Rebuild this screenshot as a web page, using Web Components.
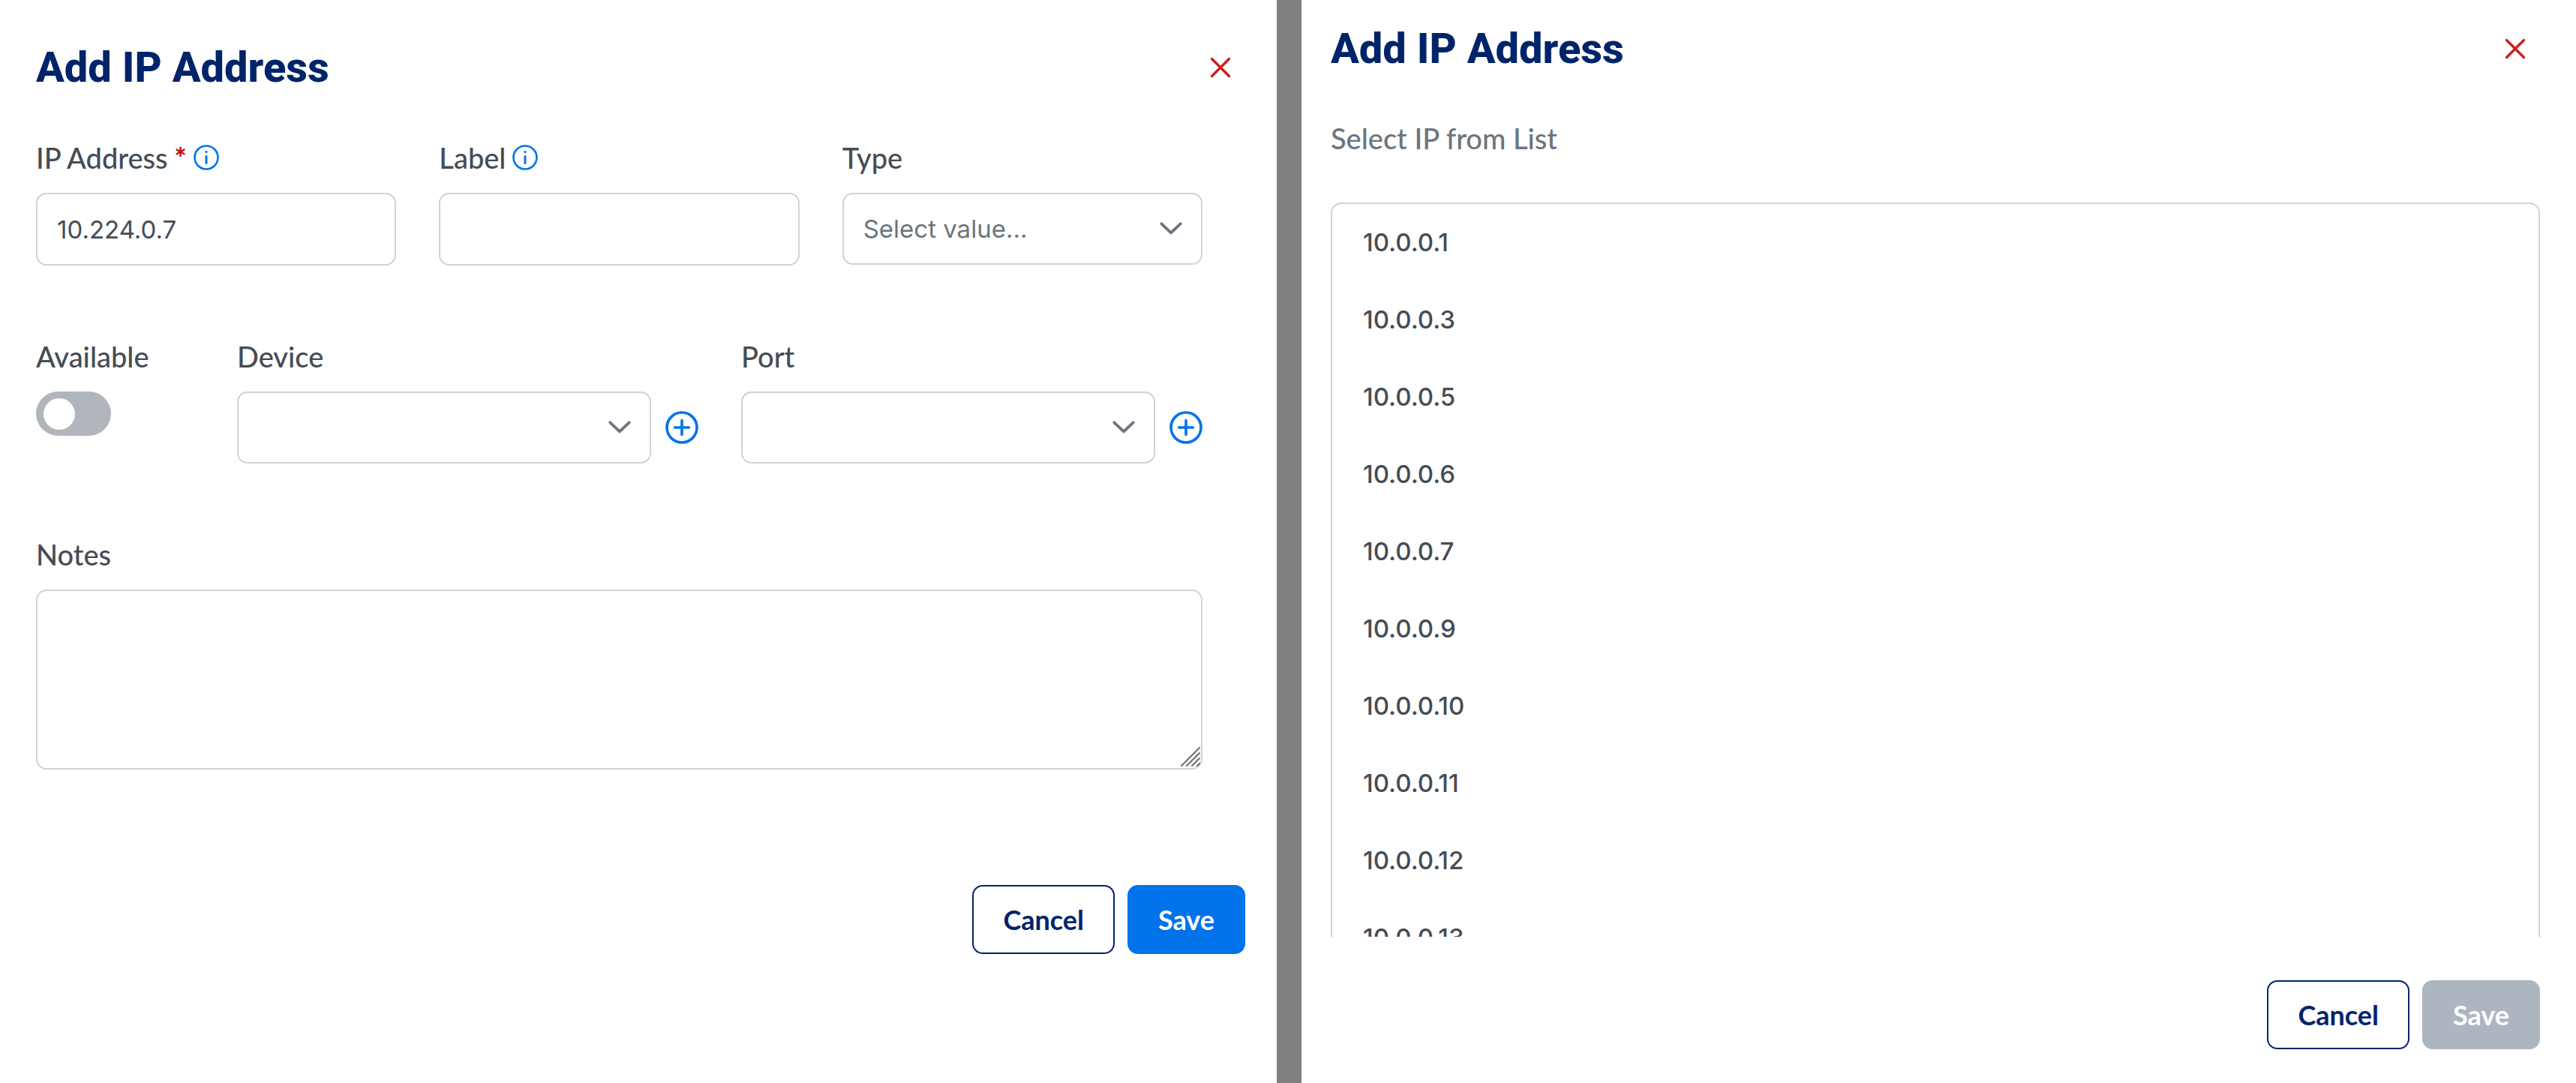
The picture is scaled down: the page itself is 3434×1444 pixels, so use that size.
<!DOCTYPE html>
<html lang="en">
<head>
<meta charset="utf-8">
<title>Add IP Address</title>
<style>
  :root {
    --navy: #002469;
    --blue: #0073ea;
    --red: #c8201f;
    --text: #464c55;
    --muted: #6c757d;
    --border: #cdd3dd;
    --disabled: #adb6bf;
    --font-ui: Lato, "Open Sans", sans-serif;
    --font-input: Inter, "Noto Sans", sans-serif;
    --font-title: Roboto, "Noto Sans", sans-serif;
  }
  body {
    margin: 0;
    min-height: 100vh;
    background: #808080;
    color: var(--text);
    font: 500 38px/48px var(--font-ui);
  }
</style>
</head>
<body>
<ip-workspace></ip-workspace>

<template id="t-workspace">
  <style>
    :host { display: grid; grid-template-columns: 1702fr 1699fr; gap: 33px; height: 100vh; }
    .form { display: flex; flex-direction: column; gap: 97px; margin: 64px 57px 154px 0; }
    .row { display: grid; gap: 57px; }
    .thirds { grid-template-columns: repeat(3, 1fr); }
    .assign { grid-template-columns: 211px 1fr 1fr; }
    .subtitle { margin: 63px 0 62px; color: var(--muted); }
    ip-list { flex: 1; margin-bottom: 58px; }
  </style>
  <ip-dialog class="left" style="--pad: 58px 42px 45px 48px; --close-inset: 11px">
    <span slot="title">Add IP Address</span>
    <div class="form">
      <div class="row thirds">
        <ip-field kind="text" label="IP Address" value="10.224.0.7" required info></ip-field>
        <ip-field kind="text" label="Label" info></ip-field>
        <ip-field kind="select" label="Type" placeholder="Select value..."></ip-field>
      </div>
      <div class="row assign">
        <ip-field kind="toggle" label="Available"></ip-field>
        <ip-field kind="select" label="Device" addable></ip-field>
        <ip-field kind="select" label="Port" addable></ip-field>
      </div>
      <ip-field kind="textarea" label="Notes"></ip-field>
    </div>
    <ip-button slot="actions" variant="outline">Cancel</ip-button>
    <ip-button slot="actions" variant="primary">Save</ip-button>
  </ip-dialog>
  <ip-dialog class="right" style="--pad: 33px 48px 45px 39px; --close-inset: 11px">
    <span slot="title">Add IP Address</span>
    <p class="subtitle">Select IP from List</p>
    <ip-list items="10.0.0.1 10.0.0.3 10.0.0.5 10.0.0.6 10.0.0.7 10.0.0.9 10.0.0.10 10.0.0.11 10.0.0.12 10.0.0.13"></ip-list>
    <ip-button slot="actions" variant="outline">Cancel</ip-button>
    <ip-button slot="actions" variant="primary" disabled>Save</ip-button>
  </ip-dialog>
</template>

<template id="t-dialog">
  <style>
    :host { display: flex; flex-direction: column; box-sizing: border-box; min-height: 0; padding: var(--pad); background: #fff; }
    header { display: flex; align-items: center; justify-content: space-between; padding-right: var(--close-inset); }
    h1 { margin: 0; color: var(--navy); font: 800 56px/64px var(--font-title); }
    .close { display: flex; padding: 8px; border: 0; background: none; color: var(--red); cursor: pointer; }
    .body { display: flex; flex-direction: column; min-height: 0; }
    :host(.right) .body { flex: 1; }
    footer { display: flex; justify-content: flex-end; gap: 17px; }
  </style>
  <header>
    <h1><slot name="title"></slot></h1>
    <button class="close" type="button" aria-label="Close">
      <svg width="28" height="28" viewBox="0 0 28 28" fill="none" stroke="currentColor" stroke-width="3.4" stroke-linecap="round"><path d="M2.5 2.5 25.5 25.5M25.5 2.5 2.5 25.5"/></svg>
    </button>
  </header>
  <div class="body"><slot></slot></div>
  <footer><slot name="actions"></slot></footer>
</template>

<template id="t-button">
  <style>
    :host { display: block; }
    button {
      display: block; box-sizing: border-box; height: 92px; padding: 0 39px;
      border: 2px solid var(--blue); border-radius: 14px;
      background: var(--blue); color: #fff; font: 700 36px/48px var(--font-ui); cursor: pointer;
    }
    :host([variant="outline"]) button { border-color: var(--navy); background: #fff; color: var(--navy); }
    button:disabled { border-color: var(--disabled); background: var(--disabled); color: #fff; cursor: default; }
  </style>
  <button type="button"><slot></slot></button>
</template>

<template id="t-list">
  <style>
    :host { display: block; min-height: 0; overflow-y: auto; scrollbar-width: none; }
    ul { margin: 0; padding: 0; list-style: none; border: 2px solid var(--border); border-radius: 14px; }
    li { padding: 0 41px; font: 500 33px/103px var(--font-input); }
  </style>
  <ul role="listbox" aria-label="Select IP from List"></ul>
</template>

<script>
  const shadowFrom = (host, id) => {
    const root = host.attachShadow({ mode: 'open' });
    root.append(document.getElementById(id).content.cloneNode(true));
    return root;
  };

  class IpDialog extends HTMLElement {
    constructor() { super(); shadowFrom(this, 't-dialog'); }
  }

  class IpButton extends HTMLElement {
    connectedCallback() {
      if (this.shadowRoot) return;
      shadowFrom(this, 't-button').querySelector('button').disabled = this.hasAttribute('disabled');
    }
  }

  class IpList extends HTMLElement {
    connectedCallback() {
      if (this.shadowRoot) return;
      const list = shadowFrom(this, 't-list').querySelector('ul');
      for (const address of this.getAttribute('items').split(' ')) {
        const item = document.createElement('li');
        item.setAttribute('role', 'option');
        item.textContent = address;
        list.append(item);
      }
    }
  }

  const FIELD_STYLE = `
    :host { display: flex; flex-direction: column; align-items: stretch; gap: 23px; min-width: 0; }
    label { display: flex; align-items: center; gap: 9px; height: 48px; }
    .star { color: #c80f10; font-weight: 900; }
    .info { color: var(--blue); }
    svg { display: block; flex: none; }
    .control { display: flex; align-items: center; gap: 19px; }
    .box { position: relative; flex: 1; min-width: 0; }
    input.text, select, textarea {
      display: block; box-sizing: border-box; width: 100%; margin: 0; padding: 0 26px;
      border: 2px solid var(--border); border-radius: 14px; background: #fff; color: var(--text);
      font: 400 33px/48px var(--font-input); outline: 0;
    }
    input.text { height: 97px; }
    select { height: 96px; appearance: none; color: var(--muted); padding-right: 80px; }
    textarea { height: 240px; padding: 20px 26px; resize: none; }
    .chevron { position: absolute; right: 27px; top: 50%; margin-top: -9px; color: var(--muted); pointer-events: none; }
    .grip { position: absolute; right: 3px; bottom: 4px; color: #6b6b6b; pointer-events: none; }
    .add { display: flex; padding: 0; border: 0; background: none; color: var(--blue); cursor: pointer; }
    .toggle { appearance: none; display: flex; align-items: center; box-sizing: border-box; width: 100px; height: 59px;
      margin: 0; padding: 0 10px; border-radius: 30px; background: #b1b6bd; cursor: pointer; }
    .toggle::before { content: ""; width: 42px; height: 42px; border-radius: 50%; background: #fff; }
    .toggle:checked { justify-content: flex-end; background: var(--blue); }
  `;

  const INFO = `<svg class="info" role="img" aria-label="More information" width="34" height="34" viewBox="0 0 34 34" fill="none" stroke="currentColor" stroke-width="2.6" stroke-linecap="round"><circle cx="17" cy="17" r="15.5"/><path d="M17 15.6v9" stroke-width="3"/><circle cx="17" cy="9.6" r="1.7" fill="currentColor" stroke="none"/></svg>`;
  const CHEVRON = `<svg class="chevron" width="30" height="17" viewBox="0 0 30 17" fill="none" stroke="currentColor" stroke-width="3.8" stroke-linecap="round" stroke-linejoin="round"><path d="M2.3 2.3 15 14.4 27.7 2.3"/></svg>`;
  const PLUS = `<svg width="44" height="44" viewBox="0 0 44 44" fill="none" stroke="currentColor" stroke-width="3.6" stroke-linecap="round"><circle cx="22" cy="22" r="20"/><path d="M22 12.6v18.8M12.6 22h18.8"/></svg>`;
  const GRIP = `<svg class="grip" width="26" height="26" viewBox="0 0 26 26" fill="none" stroke="currentColor" stroke-width="2" stroke-linecap="round"><path d="M1 25 25 1M8 25 25 8M15 25 25 15M22 25 25 22"/></svg>`;

  class IpField extends HTMLElement {
    connectedCallback() {
      if (this.shadowRoot) return;
      const label = this.getAttribute('label');
      const value = this.getAttribute('value') || '';
      const required = this.hasAttribute('required');
      const controls = {
        text: () => `<div class="box"><input class="text" id="control" type="text" value="${value}" ${required ? 'required' : ''}></div>`,
        select: () => `<div class="box"><select id="control"><option>${this.getAttribute('placeholder') || ''}</option></select>${CHEVRON}</div>`,
        textarea: () => `<div class="box"><textarea id="control"></textarea>${GRIP}</div>`,
        toggle: () => `<input class="toggle" id="control" type="checkbox" role="switch">`,
      };
      this.attachShadow({ mode: 'open' }).innerHTML = `
        <style>${FIELD_STYLE}</style>
        <label for="control"><span>${label}</span>${required ? '<span class="star">*</span>' : ''}${this.hasAttribute('info') ? INFO : ''}</label>
        <div class="control">${controls[this.getAttribute('kind')]()}${this.hasAttribute('addable') ? `<button class="add" type="button" aria-label="Add ${label}">${PLUS}</button>` : ''}</div>`;
    }
  }

  class IpWorkspace extends HTMLElement {
    constructor() { super(); shadowFrom(this, 't-workspace'); }
  }

  customElements.define('ip-dialog', IpDialog);
  customElements.define('ip-button', IpButton);
  customElements.define('ip-list', IpList);
  customElements.define('ip-field', IpField);
  customElements.define('ip-workspace', IpWorkspace);
</script>
</body>
</html>
